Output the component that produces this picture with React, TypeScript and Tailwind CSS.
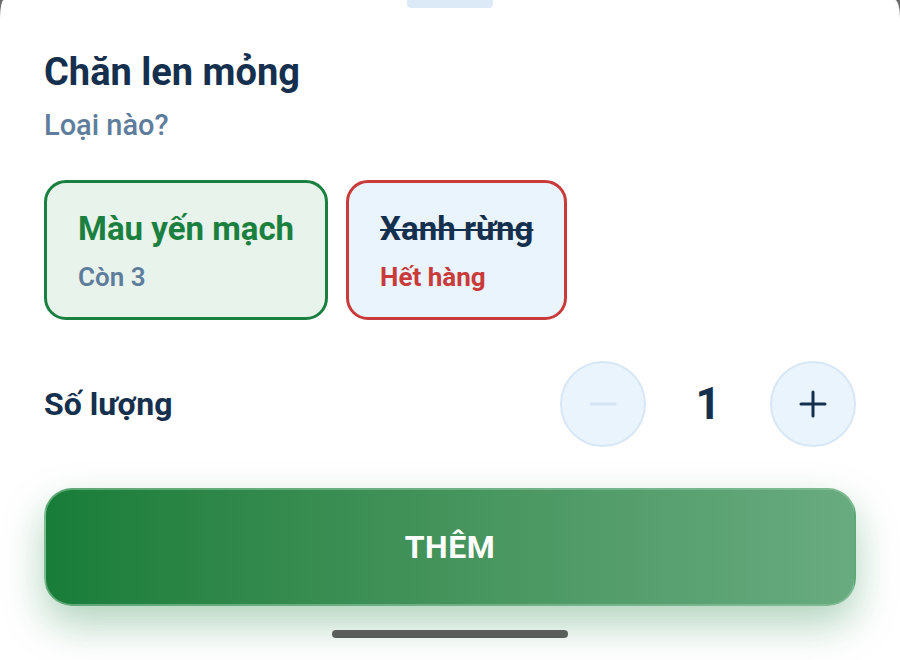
import React from "react";

export default function App() {
  return (
    <div className="w-[900px] h-[660px] bg-[#6b6b6b] overflow-hidden" style={{ fontFamily: "Roboto, 'Noto Sans', sans-serif" }}>
      <div className="relative w-full h-full bg-white rounded-tl-[4px_18px] rounded-tr-[5px_18px] flex flex-col px-[44px]">
        <div className="absolute left-[407px] top-0 w-[86px] h-[8px] rounded-b-[4px] bg-[#dce9f6]" />
        <h1 className="mt-[50px] text-[38px] leading-[44px] font-bold text-[#14304e]">Chăn len mỏng</h1>
        <p className="mt-[15px] text-[29px] leading-[32px] font-medium text-[#5e7d9c]">Loại nào?</p>
        <div className="mt-[39px] flex gap-[18px]">
          <div className="h-[140px] rounded-[22px] border-[3px] border-[#1a8040] bg-[#e8f3ec] px-[31px] pt-[27px]">
            <div className="text-[33px] leading-[38px] font-bold text-[#1a8040]">Màu yến mạch</div>
            <div className="mt-[14px] text-[26px] leading-[30px] font-semibold text-[#5e7d9c]">Còn 3</div>
          </div>
          <div className="h-[140px] rounded-[22px] border-[3px] border-[#c93a3a] bg-[#eaf4fd] px-[31px] pt-[27px]">
            <div className="text-[33px] leading-[38px] font-bold text-[#14304e] line-through decoration-2">Xanh rừng</div>
            <div className="mt-[14px] text-[26px] leading-[30px] font-bold text-[#c93a3a]">Hết hàng</div>
          </div>
        </div>
        <div className="mt-[41px] flex items-center justify-between">
          <span className="text-[32px] leading-[36px] font-bold text-[#14304e]">Số lượng</span>
          <div className="flex items-center">
            <div className="w-[86px] h-[86px] rounded-full bg-[#eaf4fd] border-2 border-[#d8e7f5] flex items-center justify-center">
              <svg width="28" height="28" viewBox="0 0 28 28"><path d="M2 14h24" stroke="#d3e3f2" strokeWidth="3" strokeLinecap="round" /></svg>
            </div>
            <div className="w-[124px] text-center text-[44px] leading-[48px] font-bold text-[#14304e]">1</div>
            <div className="w-[86px] h-[86px] rounded-full bg-[#eaf4fd] border-2 border-[#d8e7f5] flex items-center justify-center">
              <svg width="28" height="28" viewBox="0 0 28 28"><path d="M2 14h24M14 2v24" stroke="#14304e" strokeWidth="3" strokeLinecap="round" /></svg>
            </div>
          </div>
        </div>
        <button className="mt-[41px] h-[118px] w-full rounded-[28px] border-2 border-[#8cc49e]/60 bg-gradient-to-r from-[#177d38] to-[#68ab80] shadow-[0_18px_40px_rgba(30,130,65,0.35)] text-white text-[32px] font-bold tracking-[0.5px]">
          THÊM
        </button>
        <div className="mt-[24px] self-center w-[236px] h-[8px] rounded-full bg-[#5a5e5a]" />
      </div>
    </div>
  );
}
